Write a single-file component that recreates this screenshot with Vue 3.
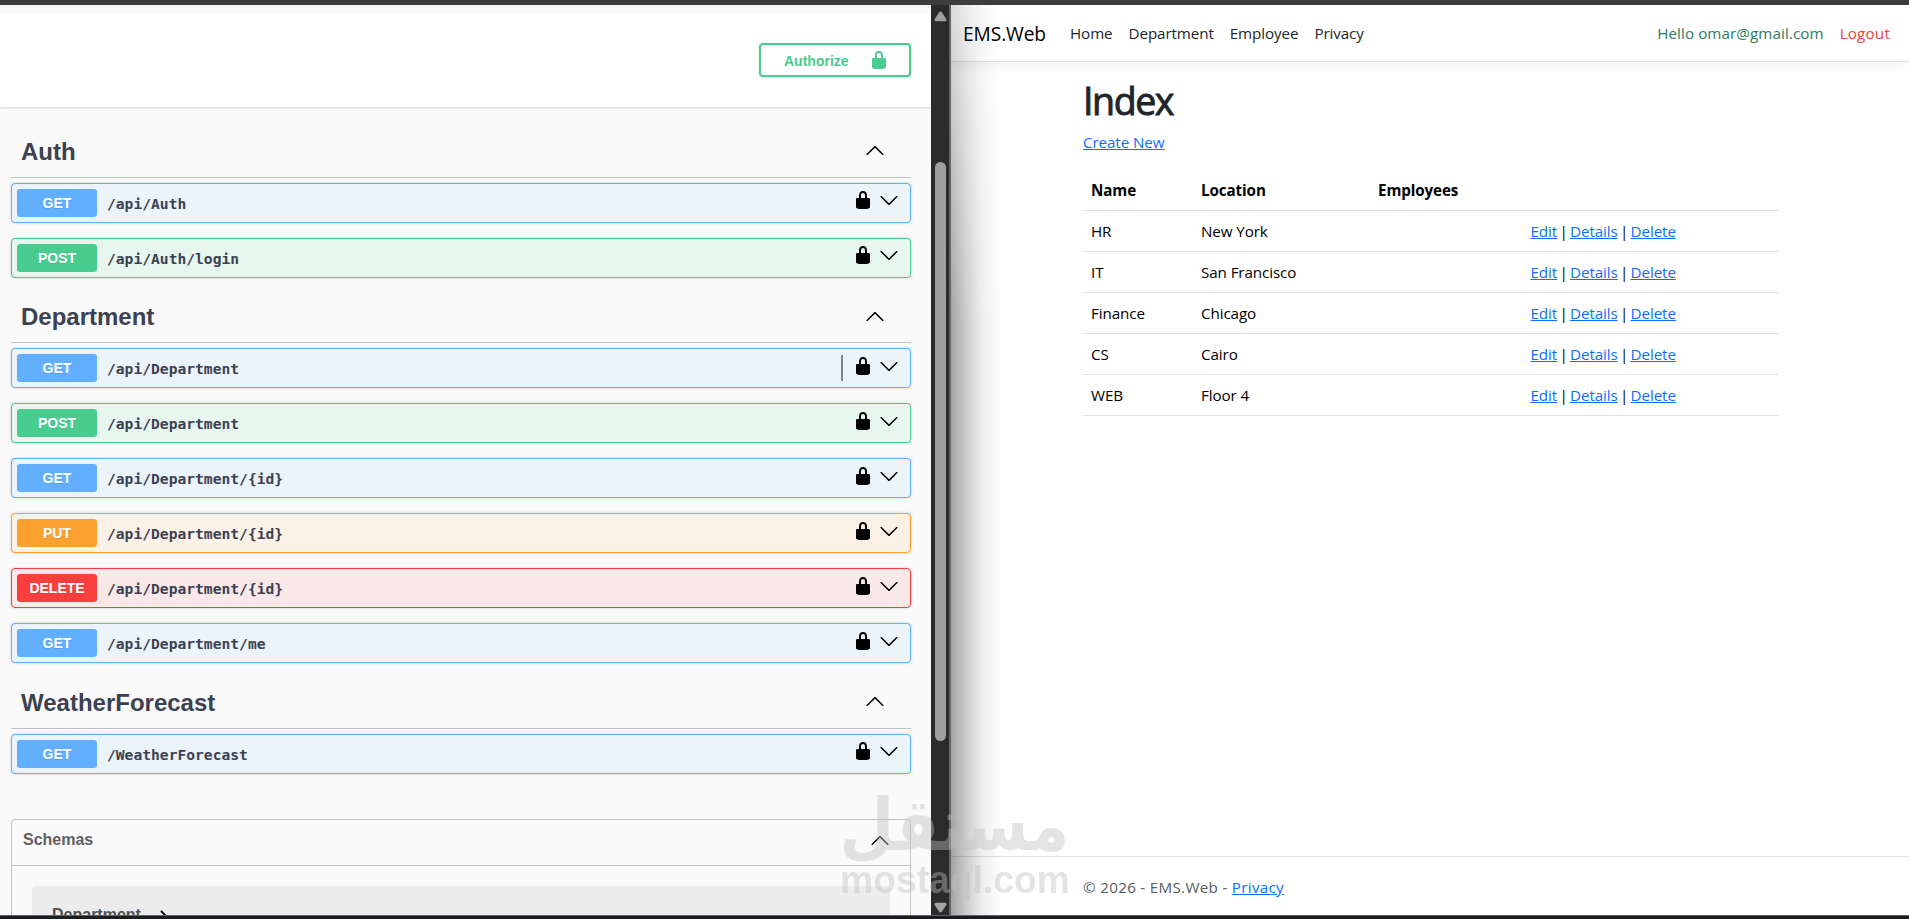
<template>
  <div class="desktop">
    <div class="window-top"></div>

    <div class="windows">
      <!-- API docs window -->
      <section class="docs">
        <div class="docs-page">
          <div class="auth-bar">
            <button class="authorize">
              <span>Authorize</span>
              <svg width="20" height="20" viewBox="0 0 20 20"><path :d="icons.lock" /></svg>
            </button>
          </div>

          <div class="tags">
            <div v-for="tag in tags" :key="tag.name" class="tag">
              <h3 class="tag-title">
                <span>{{ tag.name }}</span>
                <svg width="20" height="20" viewBox="0 0 20 20"><path :d="icons.up" /></svg>
              </h3>
              <div v-for="(op, i) in tag.ops" :key="i" class="op" :class="op.method.toLowerCase()">
                <span class="method">{{ op.method }}</span>
                <span class="path">{{ op.path }}</span>
                <span v-if="op.caret" class="caret"></span>
                <svg class="lock" width="20" height="20" viewBox="0 0 20 20"><path :d="icons.lock" /></svg>
                <svg width="20" height="20" viewBox="0 0 20 20"><path :d="icons.down" /></svg>
              </div>
            </div>
          </div>

          <div class="schemas">
            <h4 class="schemas-title">
              <span>Schemas</span>
              <svg width="20" height="20" viewBox="0 0 20 20"><path :d="icons.up" /></svg>
            </h4>
            <div class="model">
              <span>Department</span>
              <svg width="10" height="12" viewBox="0 0 10 12">
                <path d="M2 1l5 5-5 5" fill="none" stroke="#000" stroke-width="1.8" />
              </svg>
            </div>
          </div>
        </div>

        <div class="scrollbar">
          <svg width="13" height="11" viewBox="0 0 13 11">
            <path d="M5.2 1.3Q6.5-.2 7.8 1.3L12.3 8Q13 10.2 11 10.2H2Q0 10.2.7 8Z" fill="#9f9f9f" />
          </svg>
          <div class="thumb"></div>
          <svg class="arrow-down" width="13" height="11" viewBox="0 0 13 11">
            <path d="M5.2 9.7Q6.5 11.2 7.8 9.7L12.3 3Q13 .8 11 .8H2Q0 .8.7 3Z" fill="#a6a6a6" />
          </svg>
        </div>
      </section>

      <!-- EMS web window -->
      <section class="web">
        <nav class="navbar">
          <a class="brand">EMS.Web</a>
          <a v-for="link in links" :key="link" class="nav-link">{{ link }}</a>
          <a class="nav-link hello">Hello omar@gmail.com</a>
          <a class="nav-link logout">Logout</a>
        </nav>

        <main class="content">
          <h1>Index</h1>
          <p class="create"><a class="link">Create New</a></p>
          <div class="row head">
            <span>Name</span>
            <span>Location</span>
            <span>Employees</span>
            <span></span>
          </div>
          <div v-for="d in departments" :key="d.name" class="row">
            <span>{{ d.name }}</span>
            <span>{{ d.location }}</span>
            <span></span>
            <span class="actions">
              <a class="link">Edit</a> | <a class="link">Details</a> | <a class="link">Delete</a>
            </span>
          </div>
        </main>

        <footer class="footer">
          <div>&copy; 2026 - EMS.Web - <a class="link">Privacy</a></div>
        </footer>
        <div class="window-shadow"></div>
      </section>
    </div>

    <div class="window-bottom"></div>

    <svg class="watermark" width="240" height="110" viewBox="0 0 240 110">
      <text class="wm-ar" x="119.5" y="60" text-anchor="middle" textLength="230" lengthAdjust="spacingAndGlyphs">مستقل</text>
      <text class="wm-en" x="5" y="103" textLength="230" lengthAdjust="spacingAndGlyphs">mostaql.com</text>
    </svg>
  </div>
</template>

<script setup>
const icons = {
  lock: 'M15.8 8H14V5.6C14 2.703 12.665 1 10 1 7.334 1 6 2.703 6 5.6V8H4c-.553 0-1 .646-1 1.199V17c0 .549.428 1.139.951 1.307l1.197.387C5.672 18.861 6.55 19 7.1 19h5.8c.549 0 1.428-.139 1.951-.307l1.196-.387c.524-.167.953-.757.953-1.306V9.199C17 8.646 16.352 8 15.8 8zM12 8H8V5.199C8 3.754 8.797 3 10 3c1.203 0 2 .754 2 2.199V8z',
  down: 'M17.418 6.109c.272-.268.709-.268.979 0s.271.701 0 .969l-7.908 7.83c-.27.268-.707.268-.979 0l-7.908-7.83c-.27-.268-.27-.701 0-.969s.709-.268.979 0L10 13.25l7.418-7.141z',
  up: 'M17.418 14.908c.272.281.709.281.979 0s.271-.701 0-.969l-7.908-7.83c-.27-.268-.707-.268-.979 0l-7.908 7.83c-.27.268-.271.701 0 .969.271.281.709.281.979 0L10 7.767l7.418 7.141z'
}

const tags = [
  {
    name: 'Auth',
    ops: [
      { method: 'GET', path: '/api/Auth' },
      { method: 'POST', path: '/api/Auth/login' }
    ]
  },
  {
    name: 'Department',
    ops: [
      { method: 'GET', path: '/api/Department', caret: true },
      { method: 'POST', path: '/api/Department' },
      { method: 'GET', path: '/api/Department/{id}' },
      { method: 'PUT', path: '/api/Department/{id}' },
      { method: 'DELETE', path: '/api/Department/{id}' },
      { method: 'GET', path: '/api/Department/me' }
    ]
  },
  {
    name: 'WeatherForecast',
    ops: [{ method: 'GET', path: '/WeatherForecast' }]
  }
]

const links = ['Home', 'Department', 'Employee', 'Privacy']

const departments = [
  { name: 'HR', location: 'New York' },
  { name: 'IT', location: 'San Francisco' },
  { name: 'Finance', location: 'Chicago' },
  { name: 'CS', location: 'Cairo' },
  { name: 'WEB', location: 'Floor 4' }
]
</script>

<style>
body {
  margin: 0;
  overflow: hidden;
}
</style>

<style scoped>
* {
  box-sizing: border-box;
}

.desktop {
  position: relative;
  display: flex;
  flex-direction: column;
  width: 1909px;
  height: 919px;
  overflow: hidden;
}

.window-top {
  height: 5px;
  background: #3c3d3d;
}

.window-bottom {
  height: 4px;
  background: #1b1c20;
  border-top: 1px solid #5f6163;
}

.windows {
  display: flex;
  height: 910px;
}

/* API docs */
.docs {
  display: flex;
  width: 951px;
  border-right: 2px solid #6a6467;
  font-family: 'Liberation Sans', Arial, sans-serif;
  color: #3b4151;
}

.docs-page {
  width: 931px;
  padding-top: 8px;
  background: #fafafa;
  overflow: hidden;
}

.auth-bar {
  display: flex;
  justify-content: flex-end;
  height: 94px;
  padding: 30px 20px 0 0;
  background: #fff;
  box-shadow: 0 1px 2px rgba(0, 0, 0, 0.15);
}

.authorize {
  display: flex;
  align-items: center;
  justify-content: space-between;
  width: 152px;
  height: 34px;
  padding: 1px 20px 0 23px;
  border: 2px solid #49cc90;
  border-radius: 4px;
  background: transparent;
  box-shadow: 0 1px 2px rgba(0, 0, 0, 0.1);
  color: #49cc90;
  font: bold 14px 'Liberation Sans', Arial, sans-serif;
}

.authorize svg {
  fill: #49cc90;
  margin-bottom: 2px;
}

.tags {
  padding: 20.5px 20px 0 11px;
}

.tag-title {
  display: flex;
  align-items: center;
  justify-content: space-between;
  height: 50.4px;
  margin: 0 0 5px;
  padding: 0 26px 0.5px 10px;
  border-bottom: 1px solid rgba(59, 65, 81, 0.3);
  font-size: 24px;
  line-height: 30px;
}

.tag-title svg {
  margin-bottom: 3.5px;
}

.op {
  display: flex;
  align-items: center;
  height: 40px;
  margin-bottom: 15px;
  padding: 0 11px 0 5px;
  border: 1px solid;
  border-radius: 4px;
  box-shadow: 0 0 3px rgba(0, 0, 0, 0.19);
}

.op svg {
  margin: 0 0 5px;
}

.op .lock {
  margin-right: 6px;
}

.method {
  width: 80px;
  border-radius: 3px;
  color: #fff;
  font-size: 14px;
  font-weight: 700;
  line-height: 28px;
  text-align: center;
  text-shadow: 0 1px 0 rgba(0, 0, 0, 0.1);
}

.path {
  flex: 1;
  padding: 1px 0 0 10px;
  font: bold 14.64px 'DejaVu Sans Mono', monospace;
}

.caret {
  width: 2px;
  height: 26px;
  margin-right: 10px;
  background: #808386;
}

.get { border-color: #61affe; background: #ebf3fb; }
.get .method { background: #61affe; }
.post { border-color: #49cc90; background: #e8f6f0; }
.post .method { background: #49cc90; }
.put { border-color: #fca130; background: #fbf1e6; }
.put .method { background: #fca130; }
.delete { border-color: #f93e3e; background: #fae7e7; }
.delete .method { background: #f93e3e; }

.schemas {
  height: 200px;
  margin: 45px 20px 0 11px;
  border: 1px solid rgba(59, 65, 81, 0.3);
  border-radius: 4px;
}

.schemas-title {
  display: flex;
  justify-content: space-between;
  height: 46px;
  margin: 0 0 20px;
  padding: 10px 20px 0 11px;
  border-bottom: 1px solid rgba(59, 65, 81, 0.3);
  color: #606060;
  font-size: 16px;
  line-height: 20px;
}

.model {
  display: flex;
  align-items: center;
  gap: 18px;
  height: 58px;
  margin: 0 20px;
  padding: 0 20px 0;
  border-radius: 4px;
  background: #ececec;
  color: #505050;
  font-size: 16px;
  font-weight: 700;
}

.model svg {
  margin-top: 2px;
}

.scrollbar {
  display: flex;
  flex-direction: column;
  align-items: center;
  width: 18px;
  padding: 6px 0 2px;
  background: #2c2a2b;
}

.thumb {
  width: 11px;
  height: 579px;
  margin-top: 140px;
  border-radius: 6px;
  background: #9f9f9f;
}

.arrow-down {
  margin-top: auto;
}

/* EMS web */
.web {
  position: relative;
  display: flex;
  flex-direction: column;
  flex: 1;
  background: #fff;
  color: #212529;
  font-family: 'Open Sans', 'Noto Sans', sans-serif;
  font-size: 15.2px;
  letter-spacing: -0.1px;
}

.window-shadow {
  position: absolute;
  top: 0;
  left: 0;
  width: 50px;
  height: 100%;
  background: linear-gradient(to right, rgba(0, 0, 0, 0.36), rgba(0, 0, 0, 0.2) 30%, rgba(0, 0, 0, 0.07) 62%, transparent);
  mask-image: linear-gradient(rgba(0, 0, 0, 0.4), #000 35%);
}

.navbar {
  display: flex;
  align-items: center;
  height: 57px;
  padding: 0 19px 0 12px;
  border-bottom: 1px solid #dee2e6;
  box-shadow: 0 4px 12px rgba(0, 0, 0, 0.05);
}

.brand {
  width: 107px;
  color: #000;
  font-size: 19.2px;
}

.nav-link {
  margin-right: 16px;
}

.hello {
  margin-left: auto;
  color: #2b7d5f;
  letter-spacing: 0.08px;
}

.logout {
  margin-right: 0;
  color: #f04440;
  letter-spacing: 0.2px;
}

.content {
  width: 696px;
  margin-left: 132px;
}

h1 {
  margin: 15px 0 5px;
  font-size: 37.5px;
  font-weight: 400;
  letter-spacing: -1.4px;
  line-height: 48px;
  -webkit-text-stroke: 0.9px #212529;
}

.create {
  margin: 0 0 16px;
  line-height: 24px;
}

.link {
  color: #0d6efd;
  text-decoration: underline;
}

.row {
  display: grid;
  grid-template-columns: 110px 177px 152.5px 1fr;
  height: 41px;
  padding: 8px;
  border-bottom: 1px solid #dee2e6;
  color: #000;
  line-height: 24px;
}

.head {
  font-weight: 700;
}

.actions {
  word-spacing: -1.5px;
}

.footer {
  margin-top: auto;
  height: 59px;
  padding-left: 132px;
  border-top: 1px solid #dee2e6;
  color: #585c5f;
  letter-spacing: 0.3px;
  line-height: 60px;
}

.watermark {
  position: absolute;
  left: 835px;
  top: 790px;
  overflow: visible;
  fill: #c0c0c0;
  opacity: 0.41;
}

.wm-ar {
  font: bold 72px 'DejaVu Sans', sans-serif;
}

.wm-en {
  font: bold 38px 'Liberation Sans', sans-serif;
}
</style>
